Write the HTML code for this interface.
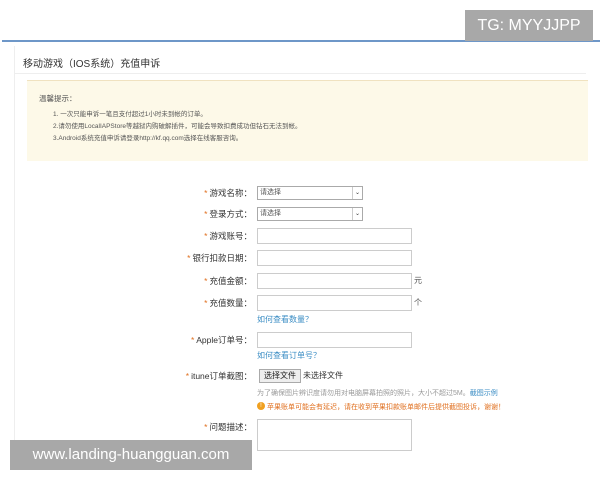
<!DOCTYPE html>
<html><head><meta charset="utf-8"><style>
body{margin:0;width:600px;height:480px;background:#fff;position:relative;overflow:hidden;font-family:"Liberation Sans","Noto Sans CJK SC",sans-serif;}
.a{position:absolute}
.lbl{position:absolute;right:348px;font-size:8.5px;color:#333;white-space:nowrap}
.lbl b{color:#e07020;font-weight:normal;margin-right:2px}
.inp{position:absolute;left:257px;width:153px;height:14px;border:1px solid #ccc;background:#fff}
.sel{position:absolute;left:257px;width:102px;height:12px;border:1px solid #aaa;font-size:7px;color:#555;line-height:12px;padding-left:2px;box-sizing:content-box}
.sel i{position:absolute;right:0;top:0;width:9px;height:12px;border-left:1px solid #ccc;font-style:normal;font-size:6px;text-align:center;color:#333}
.link{position:absolute;left:257px;font-size:8px;color:#3b8dc4}
</style></head><body>
<div class="a" style="left:2px;top:40px;width:598px;height:2px;background:#6e97c8"></div>
<div class="a" style="left:465px;top:10px;width:128px;height:31px;background:#a8a8a8;color:#fff;font-size:16px;line-height:31px;text-align:center">TG: MYYJJPP</div>
<div class="a" style="left:14px;top:46px;width:1px;height:400px;background:#eee"></div>
<div class="a" style="left:23px;top:55px;font-size:10px;color:#333">移动游戏（IOS系统）充值申诉</div>
<div class="a" style="left:14px;top:73px;width:572px;height:1px;background:#eee"></div>
<div class="a" style="left:27px;top:80px;width:561px;height:80px;background:#fdf9e8;border-top:1px solid #f0e2c0"></div>
<div class="a" style="left:39px;top:93px;font-size:7.5px;color:#555">温馨提示：</div>
<div class="a" style="left:53px;top:109px;font-size:6.5px;color:#555;line-height:12px">1. 一次只能申诉一笔且支付超过1小时未到帐的订单。<br>2.请勿使用LocalIAPStore等越狱内购破解插件，可能会导致扣费成功但钻石无法到帐。<br>3.Android系统充值申诉请登录http://kf.qq.com选择在线客服咨询。</div>

<div class="lbl" style="top:187px"><b>*</b>游戏名称：</div><div class="sel" style="top:186px">请选择<i>⌄</i></div>
<div class="lbl" style="top:208px"><b>*</b>登录方式：</div><div class="sel" style="top:207px">请选择<i>⌄</i></div>
<div class="lbl" style="top:230px"><b>*</b>游戏账号：</div><div class="inp" style="top:228px"></div>
<div class="lbl" style="top:252px"><b>*</b>银行扣款日期：</div><div class="inp" style="top:250px"></div>
<div class="lbl" style="top:275px"><b>*</b>充值金额：</div><div class="inp" style="top:273px"></div><div class="a" style="left:414px;top:275px;font-size:8px;color:#555">元</div>
<div class="lbl" style="top:297px"><b>*</b>充值数量：</div><div class="inp" style="top:295px"></div><div class="a" style="left:414px;top:297px;font-size:8px;color:#555">个</div>
<div class="link" style="top:314px">如何查看数量？</div>
<div class="lbl" style="top:334px"><b>*</b>Apple订单号：</div><div class="inp" style="top:332px"></div>
<div class="link" style="top:350px">如何查看订单号？</div>
<div class="lbl" style="top:370px"><b>*</b>itune订单截图：</div>
<div class="a" style="left:259px;top:369px;width:40px;height:12px;border:1px solid #aaa;background:#eee;font-size:8px;line-height:12px;text-align:center;color:#222">选择文件</div>
<div class="a" style="left:303px;top:370px;font-size:8px;color:#333">未选择文件</div>
<div class="a" style="left:257px;top:388px;font-size:7px;color:#999">为了确保图片辨识度请勿用对电脑屏幕拍照的照片，大小不超过5M。<span style="color:#3b8dc4">截图示例</span></div>
<div class="a" style="left:257px;top:402px;width:8px;height:8px;border-radius:50%;background:#f0a020;color:#fff;font-size:6px;line-height:8px;text-align:center">!</div>
<div class="a" style="left:267px;top:402px;font-size:7px;color:#e07020">苹果账单可能会有延迟，请在收到苹果扣款账单邮件后提供截图投诉，谢谢！</div>
<div class="lbl" style="top:421px"><b>*</b>问题描述：</div><div class="inp" style="top:419px;height:30px"></div>
<div class="a" style="left:10px;top:440px;width:242px;height:30px;background:#a8a8a8;color:#fff;font-size:15px;line-height:30px;text-align:center">www.landing-huangguan.com</div>
</body></html>
